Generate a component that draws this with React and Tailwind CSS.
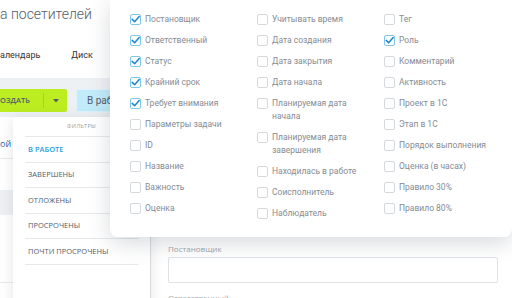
import React from "react";

const COLUMNS = [
  [
    ["Постановщик", true],
    ["Ответственный", true],
    ["Статус", true],
    ["Крайний срок", true],
    ["Требует внимания", true],
    ["Параметры задачи"],
    ["ID"],
    ["Название"],
    ["Важность"],
    ["Оценка"],
  ],
  [
    ["Учитывать время"],
    ["Дата создания"],
    ["Дата закрытия"],
    ["Дата начала"],
    ["Планируемая дата начала"],
    ["Планируемая дата завершения"],
    ["Находилась в работе"],
    ["Соисполнитель"],
    ["Наблюдатель"],
  ],
  [
    ["Тег"],
    ["Роль", true],
    ["Комментарий"],
    ["Активность"],
    ["Проект в 1С"],
    ["Этап в 1С"],
    ["Порядок выполнения"],
    ["Оценка (в часах)"],
    ["Правило 30%"],
    ["Правило 80%"],
  ],
];

const FILTERS = ["В работе", "Завершены", "Отложены", "Просрочены", "Почти просрочены"];

const Checkbox = ({ checked }) =>
  checked ? (
    <span className="w-[11px] h-[11px] shrink-0 mt-[1px] rounded-[2px] border border-[#7fc6ea] bg-white flex items-center justify-center">
      <svg width="9" height="9" viewBox="0 0 9 9">
        <path d="M1.2 4.4 L3.6 6.8 L8.2 1.6" fill="none" stroke="#1f86cc" strokeWidth="1.5" strokeLinecap="round" strokeLinejoin="round" />
      </svg>
    </span>
  ) : (
    <span className="w-[11px] h-[11px] shrink-0 mt-[1px] rounded-[2px] border border-[#d5d9de] bg-white" />
  );

export default function App() {
  return (
    <div className="relative w-[512px] h-[298px] overflow-hidden bg-white font-['Open_Sans',sans-serif]">
      {/* page behind */}
      <div className="h-[78px] bg-white flex flex-col">
        <div className="pt-[2px] font-['Roboto',sans-serif] text-[14px] font-light text-[#535c69] leading-[24px] whitespace-nowrap">
          а посетителей
        </div>
        <div className="mt-[23px] flex gap-[31px] font-['Roboto',sans-serif] text-[9px] text-[#333] whitespace-nowrap">
          <span>алендарь</span>
          <span>Диск</span>
        </div>
      </div>

      <div className="h-[39px] bg-[#eef1f4] flex items-start pt-[11px] gap-[9px]">
        <div className="h-[23px] w-[67px] bg-[#bbed21] rounded-r-[2px] flex items-center text-[7.5px] font-semibold text-[#535c69]">
          <span className="w-[43px]">ОЗДАТЬ</span>
          <span className="h-[15px] w-px bg-[#a7d61a]" />
          <span className="flex-1 flex justify-center">
            <svg width="6" height="4" viewBox="0 0 6 4">
              <path d="M0 0 H6 L3 3.5 Z" fill="#535c69" />
            </svg>
          </span>
        </div>
        <div className="h-[23px] w-[60px] bg-[#c3ecfa] border border-[#dff4fc] rounded-[2px] flex items-center pl-[10px] font-['Roboto',sans-serif] text-[10px] text-[#535c69]">
          В работе
        </div>
      </div>

      <div className="flex h-[181px]">
        <div className="w-[150px] flex flex-col">
          <div className="h-[42px] border-b border-[#e8ebee] flex items-end pb-[8px] text-[9px] text-[#2067b0] whitespace-nowrap">
            ой г
          </div>
          <div className="h-[31px]" />
          <div className="h-[25px] bg-[#eef1f4]" />
          <div className="h-[68px] border-b border-[#e8ebee]" />
        </div>
        <div className="flex-1 border-l border-[#e3e6e9] pl-[17px] pt-[125px]">
          <div className="text-[8px] text-[#a0a6ad] leading-[14px]">Постановщик</div>
          <div className="mt-[1px] w-[330px] h-[26px] border border-[#dfe2e6] rounded-[2px]" />
          <div className="mt-[8px] text-[8px] text-[#a0a6ad] leading-[14px]">Ответственный</div>
        </div>
      </div>

      {/* filter dropdown */}
      <div className="absolute left-[13px] top-[117px] w-[137px] h-[200px] bg-white rounded-t-[4px] shadow-[0_2px_14px_rgba(80,90,100,0.16)] px-[12px]">
        <div className="h-[20px] border-b border-[#e6e9ec] flex items-center justify-center text-[5.5px] text-[#9aa0a7] tracking-[0.3px]">
          ФИЛЬТРЫ
        </div>
        {FILTERS.map((f, i) => (
          <div
            key={f}
            className={`h-[25.6px] border-b border-[#e6e9ec] flex items-center pl-[3px] text-[7.5px] uppercase whitespace-nowrap ${
              i === 0 ? "text-[#2d9fe0] font-semibold" : "text-[#535c69]"
            }`}
          >
            {f}
          </div>
        ))}
      </div>

      {/* columns popup */}
      <div className="absolute left-[110px] top-0 w-[402px] h-[237px] bg-white rounded-b-[8px] shadow-[0_6px_22px_rgba(60,70,80,0.2)] pl-[20px] pt-[13px] grid grid-cols-[127px_127px_127px] font-['Roboto',sans-serif]">
        {COLUMNS.map((col, ci) => (
          <div key={ci} className="flex flex-col gap-[8px]">
            {col.map(([label, checked]) => (
              <div key={label} className="flex items-start gap-[4px]">
                <Checkbox checked={checked} />
                <span className="max-w-[92px] text-[8.5px] leading-[13px] text-[#868c94]">{label}</span>
              </div>
            ))}
          </div>
        ))}
      </div>
    </div>
  );
}
